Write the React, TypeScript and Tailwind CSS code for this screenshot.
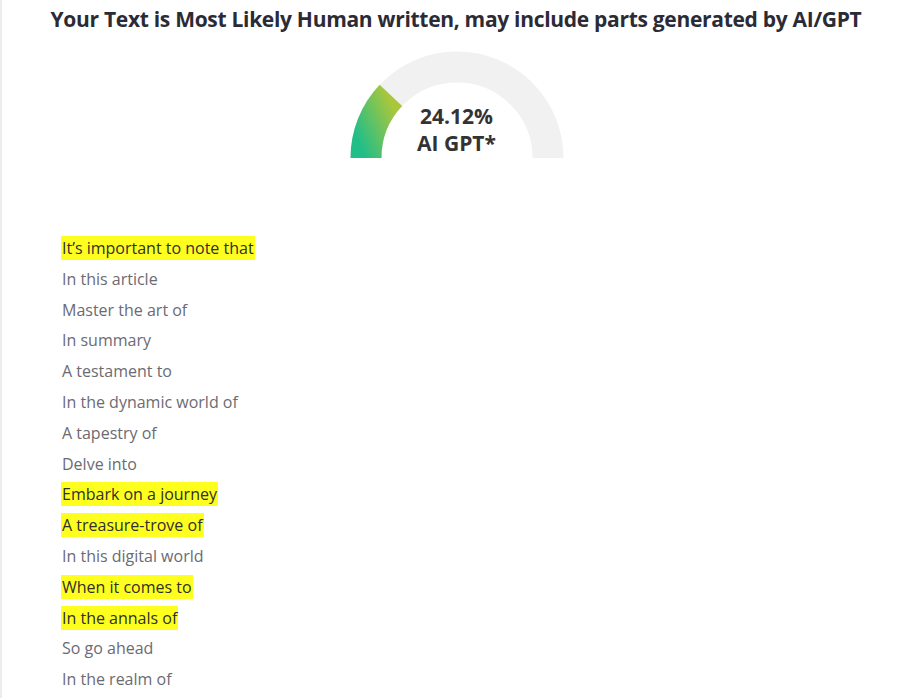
import React from "react";

const items: { t: string; h?: boolean }[] = [
  { t: "It\u2019s important to note that", h: true },
  { t: "In this article" },
  { t: "Master the art of" },
  { t: "In summary" },
  { t: "A testament to" },
  { t: "In the dynamic world of" },
  { t: "A tapestry of" },
  { t: "Delve into" },
  { t: "Embark on a journey", h: true },
  { t: "A treasure-trove of", h: true },
  { t: "In this digital world" },
  { t: "When it comes to", h: true },
  { t: "In the annals of", h: true },
  { t: "So go ahead" },
  { t: "In the realm of" },
];

function Gauge() {
  const r = 91;
  const cx = 107;
  const cy = 107;
  const pct = 24.12;
  const ang = Math.PI - (pct / 100) * Math.PI;
  const ex = cx + r * Math.cos(ang);
  const ey = cy - r * Math.sin(ang);
  return (
    <div className="relative w-[214px] h-[108px]">
      <svg width="214" height="108" viewBox="0 0 214 108" className="absolute inset-0">
        <defs>
          <linearGradient id="g" x1="0" y1="1" x2="0.9" y2="0">
            <stop offset="0" stopColor="#22be88" />
            <stop offset="1" stopColor="#aac73b" />
          </linearGradient>
        </defs>
        <path
          d={`M ${cx - r} ${cy} A ${r} ${r} 0 0 1 ${cx + r} ${cy}`}
          fill="none"
          stroke="#f1f1f1"
          strokeWidth="31"
        />
        <path
          d={`M ${cx - r} ${cy} A ${r} ${r} 0 0 1 ${ex} ${ey}`}
          fill="none"
          stroke="url(#g)"
          strokeWidth="31"
        />
      </svg>
      <div className="absolute left-0 right-0 top-[52px] flex flex-col items-center text-[21px] leading-[27px] font-bold text-[#333333]">
        <span>24.12%</span>
        <span>AI GPT*</span>
      </div>
    </div>
  );
}

export default function App() {
  return (
    <div
      className="w-[910px] h-[698px] overflow-hidden bg-white border-l-2 border-[#ececec]"
      style={{ fontFamily: '"Open Sans", "Noto Sans", sans-serif' }}
    >
      <div className="pt-[5px] text-center text-[21px] leading-[28px] font-bold text-[#2b2b36] tracking-[-0.3px]">
        Your Text is Most Likely Human written, may include parts generated by AI/GPT
      </div>
      <div className="flex justify-center mt-[18px] pl-[1px]">
        <Gauge />
      </div>
      <div className="mt-[77px] pl-[59px] flex flex-col gap-[6.8px] text-[16px] leading-[24px]">
        {items.map((it) => (
          <div key={it.t} className="flex">
            <span
              className={
                it.h
                  ? "bg-[#ffff1f] text-[#2f2f2f] px-[1px]"
                  : "text-[#6b6b73] px-[1px]"
              }
            >
              {it.t}
            </span>
          </div>
        ))}
      </div>
    </div>
  );
}
